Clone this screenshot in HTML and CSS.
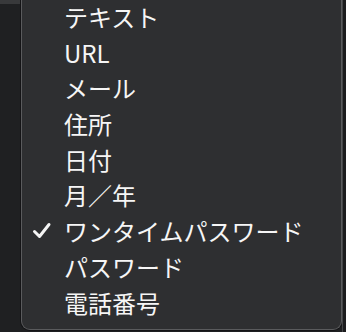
FILE: index.html
```html
<!DOCTYPE html>
<html lang="ja">
<head>
<meta charset="utf-8">
<link rel="stylesheet" href="styles.css">
</head>
<body>
<div class="page">
  <div class="gutter"><div class="gutter-top"></div></div>
  <ul class="menu">
    <li class="item">テキスト</li>
    <li class="item">URL</li>
    <li class="item">メール</li>
    <li class="item">住所</li>
    <li class="item">日付</li>
    <li class="item">月／年</li>
    <li class="item checked"><svg class="check" width="20" height="18" viewBox="0 0 20 18"><path d="M2.5 9.5 L7.5 14.5 L17 2.5" fill="none" stroke="#f4f4f4" stroke-width="3" stroke-linecap="round" stroke-linejoin="round"/></svg>ワンタイムパスワード</li>
    <li class="item">パスワード</li>
    <li class="item">電話番号</li>
  </ul>
  <div class="right"></div>
</div>
</body>
</html>
```
FILE: styles.css
```css
html, body {
  margin: 0;
  padding: 0;
  background: #1e1f21;
  width: 346px;
  height: 332px;
  overflow: hidden;
}
.page {
  display: flex;
  align-items: flex-start;
  height: 332px;
}
.gutter {
  width: 21px;
  height: 332px;
  background: #1f2022;
  flex: none;
}
.gutter-top {
  height: 4px;
  background: #38393b;
}
.menu {
  list-style: none;
  margin: -2px 0 0 0;
  padding: 1px 0 9px 0;
  width: 319px;
  flex: none;
  background: #2e2f31;
  border: 1px solid #5a5b5d;
  border-top: none;
  border-radius: 0 0 9px 9px;
  box-shadow: 0 0 0 1px #141416;
  font-family: "Noto Sans CJK JP", "Noto Sans", sans-serif;
  font-size: 24px;
  color: #f6f6f6;
}
.item {
  height: 35.7px;
  line-height: 35.7px;
  padding-left: 42px;
  position: relative;
  white-space: nowrap;
}
.check {
  position: absolute;
  left: 10px;
  top: 9px;
}
.right {
  flex: 1;
  height: 332px;
  background: #1c1c1e;
  border-left: 1px solid #444547;
}
```
